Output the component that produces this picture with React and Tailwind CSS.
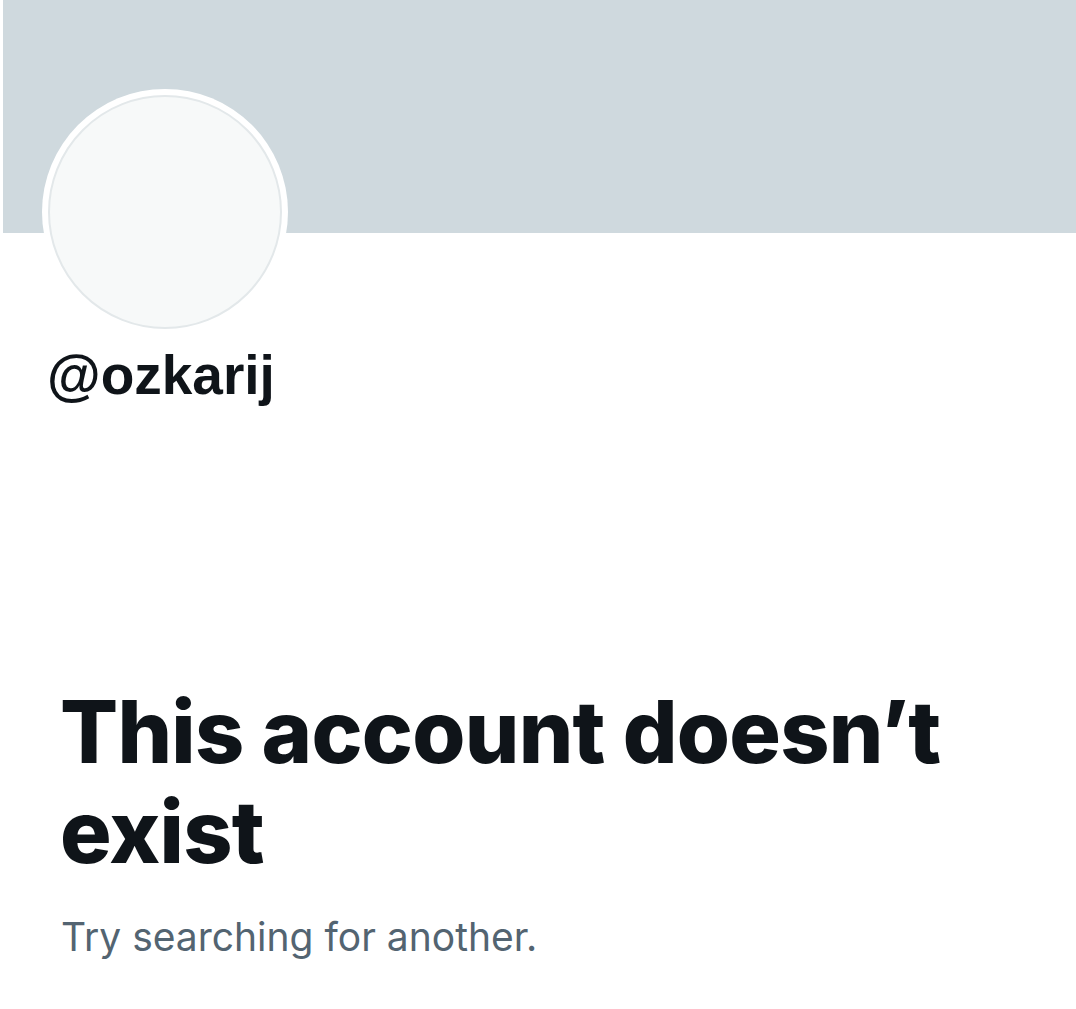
export default function App() {
  return (
    <div className="w-[1076px] h-[1009px] bg-white overflow-hidden">
      <div className="ml-[3px] h-[233px] bg-[#CFD9DE]" />
      <div className="ml-[42px] -mt-[144px] w-[246px] h-[246px] rounded-full bg-white flex items-center justify-center">
        <div className="w-[234px] h-[234px] rounded-full bg-[#F7F9F9] border-2 border-[#E3E8EA]" />
      </div>
      <div
        className="ml-[47px] mt-[10px] text-[55px] leading-[60px] font-bold text-[#0F1419]"
        style={{ fontFamily: '"Liberation Sans", Arial, sans-serif' }}
      >
        @ozkarij
      </div>
      <div
        className="ml-[60px] mt-[277px] text-[86px] leading-[100px] font-extrabold text-[#0F1419] tracking-[-0.75px]"
        style={{ fontFamily: 'Inter, "Noto Sans", sans-serif' }}
      >
        This account doesn’t
        <br />
        exist
      </div>
      <div
        className="ml-[61px] mt-[31px] text-[39px] leading-[48px] text-[#536471]"
        style={{ fontFamily: 'Inter, "Noto Sans", sans-serif' }}
      >
        Try searching for another.
      </div>
    </div>
  );
}
